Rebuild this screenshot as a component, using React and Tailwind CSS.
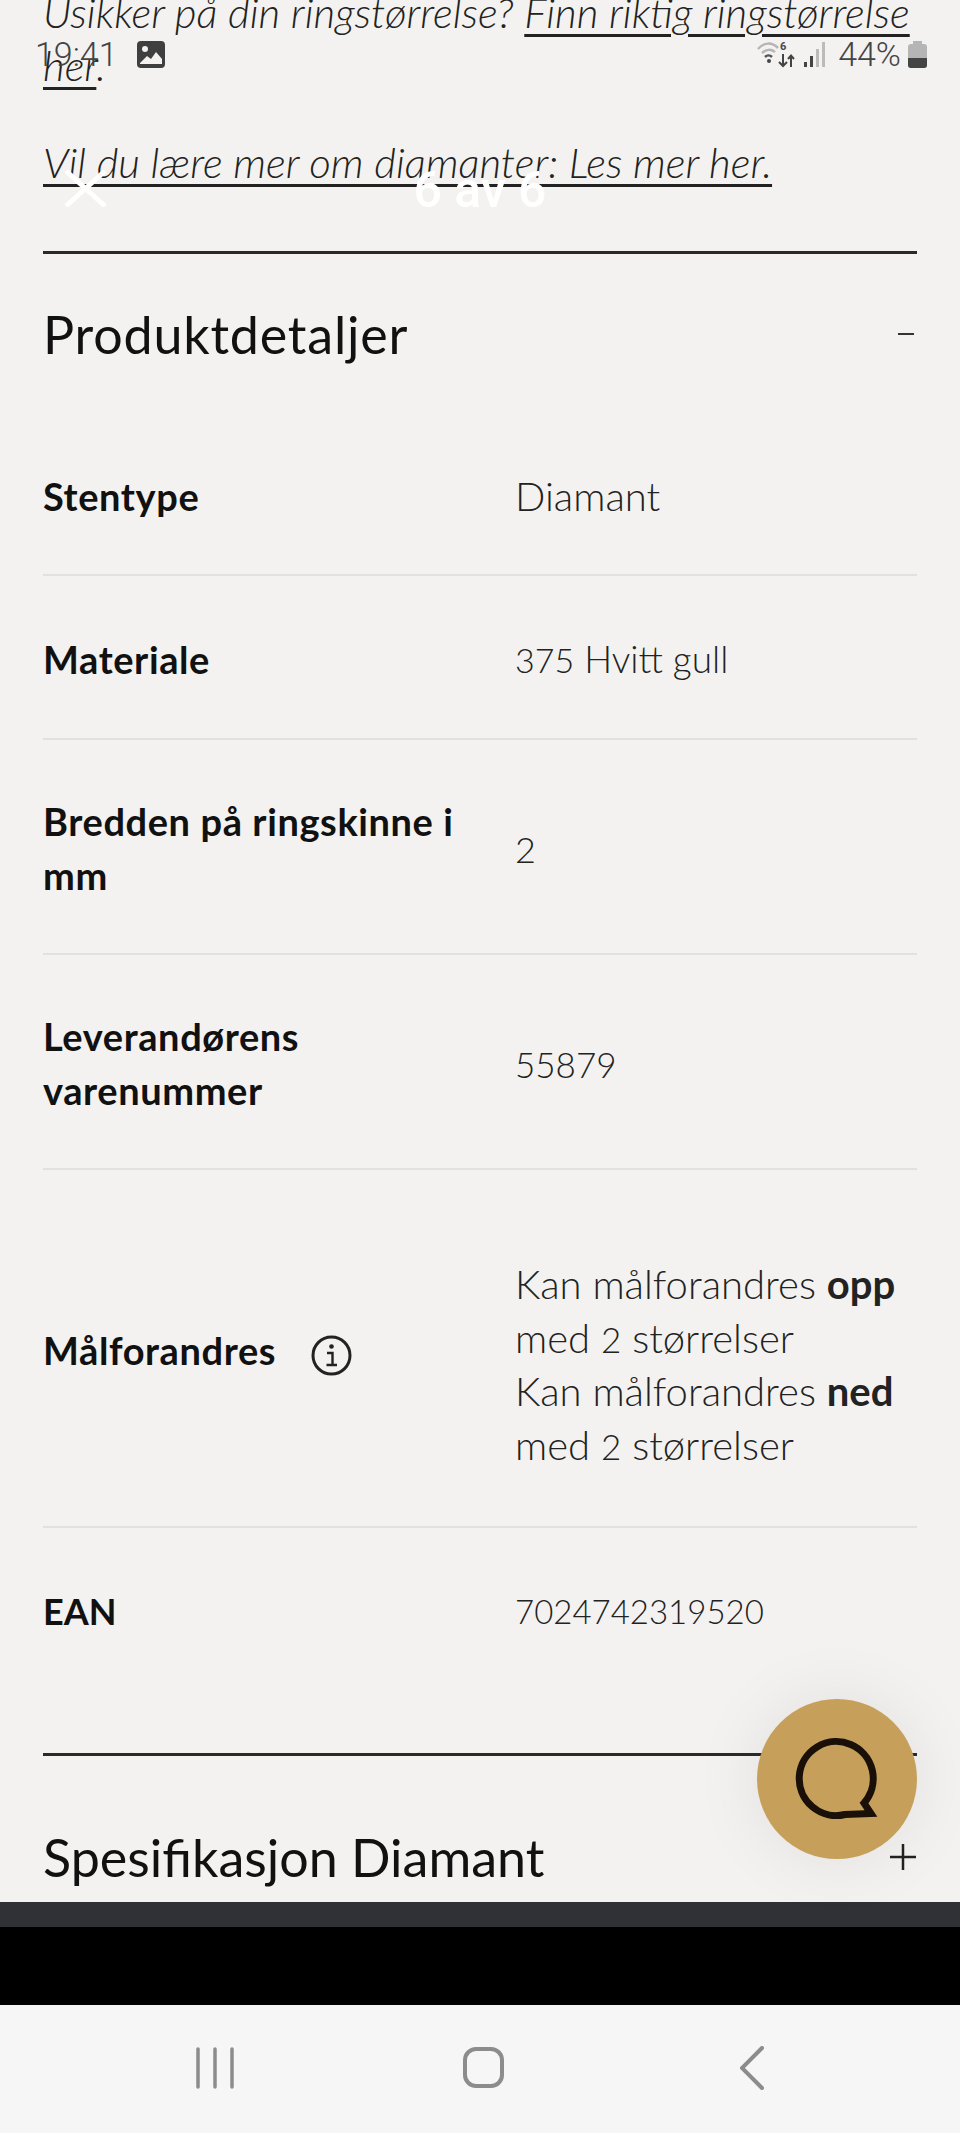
const ROWS = [
  { label: "Stentype", value: <span className="text-[40px]">Diamant</span>, rowClass: "pt-[56px] pb-[51px]" },
  {
    label: "Materiale",
    value: (
      <span className="text-[37px]">
        <span className="text-[34px] leading-none">375</span> Hvitt gull
      </span>
    ),
    rowClass: "pt-[55px] pb-[52px]",
  },
  { label: "Bredden på ringskinne i mm", value: <span className="text-[36px]">2</span>, rowClass: "pt-[54px] pb-[51px]" },
  { label: "Leverandørens varenummer", value: <span className="text-[35px]">55879</span>, rowClass: "pt-[54px] pb-[51px]" },
];

function WifiIcon() {
  return (
    <svg width="38" height="27" viewBox="0 0 38 27" fill="none" className="text-[#b5b5b5]">
      <path d="M1 8C7 1 15 1 21 7" stroke="currentColor" strokeWidth="2.5" />
      <path d="M5 12C9 8 14 8 18 11" stroke="currentColor" strokeWidth="2.5" />
      <path d="M8 16C10 14 13 14 15 16" stroke="#555" strokeWidth="2.5" />
      <circle cx="12" cy="20" r="2" fill="#444" />
      <text x="23" y="9" fontSize="11" fontWeight="700" fill="#444" fontFamily="Roboto, sans-serif">6</text>
      <path d="M26 13V25M22 21L26 25L30 21" stroke="#444" strokeWidth="2" />
      <path d="M34 26V15M31 18L34 14.5L37 18" stroke="#444" strokeWidth="2" />
    </svg>
  );
}

function SignalIcon() {
  return (
    <div className="flex items-end gap-[3px] h-[25px]">
      <div className="w-[3px] h-[5px] bg-[#444]" />
      <div className="w-[3px] h-[11px] bg-[#444]" />
      <div className="w-[3px] h-[18px] bg-[#bbb]" />
      <div className="w-[3px] h-[25px] bg-[#bbb]" />
    </div>
  );
}

function StatusBar() {
  return (
    <div className="absolute top-[41px] left-[35px] right-[33px] flex items-center justify-between font-['Roboto',sans-serif] font-light text-[34px] leading-[27px] text-[#444]">
      <div className="flex items-center gap-[19px]">
        <span>19:41</span>
        <svg width="28" height="27" viewBox="0 0 28 27">
          <rect width="28" height="27" rx="4" fill="#3f3f3f" />
          <circle cx="8" cy="8" r="3" fill="#f3f2f0" />
          <path d="M3 22L10 15L14 18L19 11L25 18V23H3Z" fill="#f3f2f0" />
        </svg>
      </div>
      <div className="flex items-center">
        <WifiIcon />
        <div className="ml-[9px]">
          <SignalIcon />
        </div>
        <span className="ml-[13px]">44%</span>
        <div className="ml-[7px] w-[19px] h-[27px] flex flex-col items-center">
          <div className="w-[9px] h-[3px] bg-[#b5b5b5]" />
          <div className="w-[19px] h-[24px] rounded-[3px] overflow-hidden bg-[#b5b5b5] flex flex-col justify-end">
            <div className="h-[10px] bg-[#444]" />
          </div>
        </div>
      </div>
    </div>
  );
}

function InfoIcon() {
  return (
    <svg width="41" height="41" viewBox="0 0 41 41" fill="none" className="shrink-0">
      <circle cx="20.5" cy="20.5" r="18.5" stroke="#222" strokeWidth="3" />
      <circle cx="20.5" cy="11.5" r="2.3" fill="#222" />
      <path d="M16 18H21.5V29M15.5 30H26" stroke="#222" strokeWidth="2.4" />
    </svg>
  );
}

function DetailRow({ label, value, rowClass }) {
  return (
    <div className={`flex items-center border-b-2 border-[#e2e1df] ${rowClass}`}>
      <div className="w-[472px] pr-[8px] font-bold tracking-[0.6px] text-[#111]">{label}</div>
      <div className="flex-1 font-light text-[#222]">{value}</div>
    </div>
  );
}

export default function App() {
  return (
    <div className="relative w-[960px] h-[2133px] overflow-hidden bg-[#f3f2f0] font-['Lato',sans-serif] text-[38px] leading-[54px] text-[#222]">
      <div className="h-[1902px] overflow-hidden px-[43px]">
        <p className="-mt-[14px] text-[42px] leading-[53px] italic font-light">
          Usikker på din ringstørrelse? <span className="underline decoration-[3px] underline-offset-[6px]">Finn riktig ringstørrelse her</span>.
        </p>
        <p className="mt-[44px] text-[42px] leading-[53px] italic font-light underline decoration-[3px] underline-offset-[6px]">
          Vil du lære mer om diamanter: Les mer her.
        </p>
        <div className="mt-[62px] border-t-[3px] border-[#2a2a2a]" />
        <div className="flex items-center justify-between h-[159px] text-[52px] text-[#111]">
          <span className="tracking-[0.8px]">Produktdetaljer</span>
          <span className="block w-[16px] h-[2px] bg-[#333] mr-[3px]" />
        </div>
        <div>
          {ROWS.map((row) => (
            <DetailRow key={row.label} {...row} />
          ))}
          <div className="flex items-center border-b-2 border-[#e2e1df]">
            <div className="w-[472px] mt-[4px] flex items-center font-bold tracking-[0.6px] text-[#111]">
              <span>Målforandres</span>
              <span className="ml-[35px] mt-[10px]">
                <InfoIcon />
              </span>
            </div>
            <div className="flex-1 pt-[88px] pb-[54px] font-light text-[40px] leading-[53.5px]">
              <p>Kan målforandres <b className="font-bold">opp</b> med <span className="text-[35px] leading-none">2</span> størrelser</p>
              <p>Kan målforandres <b className="font-bold">ned</b> med <span className="text-[35px] leading-none">2</span> størrelser</p>
            </div>
          </div>
          <div className="flex items-center py-[56px]">
            <div className="w-[472px] font-bold text-[36px] text-[#111]">EAN</div>
            <div className="flex-1 font-light text-[33px]">7024742319520</div>
          </div>
        </div>
        <div className="mt-[59px] border-t-[3px] border-[#2a2a2a]" />
        <div className="flex items-center justify-between h-[202px] text-[52px] text-[#111]">
          <span>Spesifikasjon Diamant</span>
          <svg width="28" height="28" viewBox="0 0 28 28" stroke="#222" strokeWidth="2.5">
            <path d="M14 1V27M1 14H27" />
          </svg>
        </div>
      </div>
      <div className="h-[25px] bg-[#303136]" />
      <div className="h-[78px] bg-black" />
      <div className="h-[128px] pb-[3px] bg-[#f6f6f6] flex items-center pl-[185px] gap-[209px] text-[#8c8c8c]">
        <div className="w-[60px] flex justify-center">
          <svg width="38" height="42" viewBox="0 0 38 42" stroke="currentColor" strokeWidth="3.5" strokeLinecap="round">
            <path d="M2 2V40M19 2V40M36 2V40" />
          </svg>
        </div>
        <div className="w-[60px] flex justify-center -ml-[1px]">
          <div className="w-[41px] h-[41px] rounded-[13px] border-[4px] border-[#8c8c8c]" />
        </div>
        <div className="w-[60px] flex justify-center">
          <svg width="24" height="44" viewBox="0 0 24 44" fill="none" stroke="currentColor" strokeWidth="4" strokeLinecap="round">
            <path d="M22 2L2 22L22 42" />
          </svg>
        </div>
      </div>

      <StatusBar />

      <svg width="43" height="37" viewBox="0 0 43 37" stroke="#fff" strokeWidth="5" className="absolute left-[64px] top-[170px]">
        <path d="M2 1L41 36M41 1L2 36" />
      </svg>
      <div className="absolute left-0 right-0 top-[161px] text-center font-['Roboto',sans-serif] font-medium text-[50px] leading-[58px] text-white">
        6 av 6
      </div>

      <div className="absolute left-[757px] top-[1699px] w-[160px] h-[160px] rounded-full bg-[#c6a05a] shadow-[0_0_70px_rgba(0,0,0,0.08)] flex items-center justify-center">
        <svg width="160" height="160" viewBox="0 0 160 160" fill="none">
          <path d="M107 104L114 114.5L88 115.5A37 37 0 1 1 107 104Z" stroke="#1a1008" strokeWidth="7" strokeLinejoin="miter" />
        </svg>
      </div>
    </div>
  );
}
